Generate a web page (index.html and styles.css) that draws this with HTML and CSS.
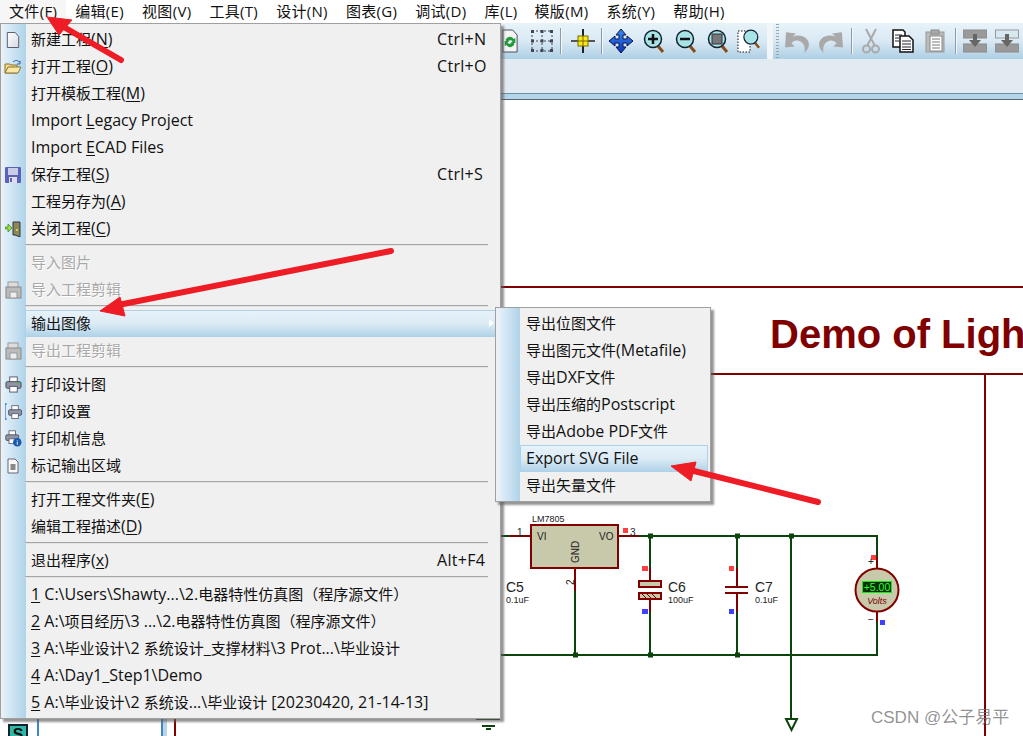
FILE: index.html
```html
<!DOCTYPE html>
<html lang="zh">
<head>
<meta charset="utf-8">
<title>Proteus</title>
<link rel="stylesheet" href="styles.css">
</head>
<body>
<svg class="defs" width="0" height="0" aria-hidden="true">
  <defs>
    <linearGradient id="blue" x1="0" y1="0" x2="0" y2="1"><stop offset="0" stop-color="#3d8cf0"/><stop offset="1" stop-color="#0a34c0"/></linearGradient>
    <linearGradient id="page" x1="0" y1="0" x2="1" y2="1"><stop offset="0" stop-color="#fff"/><stop offset="1" stop-color="#d5dae2"/></linearGradient>
    <g id="mag"><path d="M17 18l5 6" stroke="#8a4b12" stroke-width="3"/><circle cx="12" cy="11" r="8.5" fill="#a8e4e6" stroke="#123" stroke-width="1.5"/></g>
    <g id="printer"><rect x="5" y="1" width="8" height="6" fill="#fff" stroke="#556"/><rect x="1" y="6" width="16" height="7" rx="1.5" fill="#8e96a4" stroke="#445"/><rect x="5" y="11" width="8" height="6" fill="#fff" stroke="#556"/></g>
    <g id="grey-doc"><rect x="3" y="1" width="10" height="12" fill="#ddd" stroke="#999"/><rect x="1" y="6" width="15" height="11" fill="#bbb" stroke="#888"/><rect x="5" y="11" width="7" height="6" fill="#eee" stroke="#999"/></g>
  </defs>
</svg>

<header class="menubar">
  <span class="top active">文件(F)</span>
  <span class="top">编辑(E)</span>
  <span class="top">视图(V)</span>
  <span class="top">工具(T)</span>
  <span class="top">设计(N)</span>
  <span class="top">图表(G)</span>
  <span class="top">调试(D)</span>
  <span class="top">库(L)</span>
  <span class="top">模版(M)</span>
  <span class="top">系统(Y)</span>
  <span class="top">帮助(H)</span>
</header>

<div class="toolbar">
  <div class="tb-group first">
    <span class="tool"><svg width="16" height="24" viewBox="0 0 18 24" preserveAspectRatio="none"><path d="M1 1h11l5 5v17H1z" fill="#f4f4f4" stroke="#445"/><path d="M4 11c2-4 7-4 9-1l2-1v5h-5l2-2c-2-1-4-1-6 1z" fill="#1f9a3c"/><path d="M14 15c-2 4-7 4-9 1l-2 1v-5h5l-2 2c2 1 4 1 6-1z" fill="#1f9a3c"/></svg></span>
    <span class="tool"><svg width="24" height="24" viewBox="0 0 24 24"><path d="M2 2h20M2 12h20M2 22h20M2 2v20M12 2v20M22 2v20" stroke="#445" stroke-dasharray="2 2" fill="none"/><path d="M1 1h3v3H1zM10.500 1h3v3h-3zM20 1h3v3h-3zM1 10.500h3v3H1zM10.500 10.500h3v3h-3zM20 10.500h3v3h-3zM1 20h3v3H1zM10.500 20h3v3h-3zM20 20h3v3h-3z" fill="#445"/></svg></span>
    <span class="tsep sep-a"></span>
    <span class="tool"><svg width="26" height="26" viewBox="0 0 26 26"><path d="M1 13h24" stroke="#555" stroke-width="2"/><path d="M13 1v24" stroke="#222" stroke-width="2"/><rect x="8" y="8" width="10" height="10" fill="#f8e81c" stroke="#7a6a00"/><path d="M13 8v10M8 13h10" stroke="#7a6a00"/></svg></span>
    <span class="tsep sep-b"></span>
    <span class="tool"><svg width="26" height="26" viewBox="0 0 26 26"><path d="M13 1l5 6h-3v4h4V8l6 5-6 5v-3h-4v4h3l-5 6-5-6h3v-4H7v3l-6-5 6-5v3h4V7H8z" fill="url(#blue)" stroke="#08154a"/></svg></span>
    <span class="tool"><svg width="24" height="26" viewBox="0 0 24 26"><use href="#mag"/><path d="M7 11h10M12 6v10" stroke="#111" stroke-width="2.500"/></svg></span>
    <span class="tool"><svg width="24" height="26" viewBox="0 0 24 26"><use href="#mag"/><path d="M7 11h10" stroke="#111" stroke-width="2.500"/></svg></span>
    <span class="tool"><svg width="24" height="26" viewBox="0 0 24 26"><use href="#mag"/><rect x="7" y="6" width="10" height="10" fill="#777" stroke="#333"/></svg></span>
    <span class="tool"><svg width="24" height="26" viewBox="0 0 24 26"><rect x="1" y="3" width="12" height="21" fill="#fff" stroke="#111" stroke-dasharray="1.500 1.500"/><use href="#mag" transform="translate(4 0) scale(.82)"/></svg></span>
  </div>
  <div class="tb-group second">
    <span class="grip"></span>
    <span class="tool"><svg width="26" height="26" viewBox="0 0 24 24"><path d="M1 4l9 1-3 3c6-3 14 0 15 6 .5 3-1 6-4 9 1-6-1-10-5-11-3-1-5 0-7 2l3 3-9 1z" fill="#a9a9a9"/></svg></span>
    <span class="tool"><svg width="26" height="26" viewBox="0 0 24 24"><path d="M23 4l-9 1 3 3c-6-3-14 0-15 6-.5 3 1 6 4 9-1-6 1-10 5-11 3-1 5 0 7 2l-3 3 9 1z" fill="#a9a9a9"/></svg></span>
    <span class="tsep sep-c"></span>
    <span class="tool"><svg width="18" height="26" viewBox="0 0 18 26" fill="none" stroke="#aaa" stroke-width="2"><path d="M4 1l9 17M14 1L5 18"/><circle cx="4.500" cy="21" r="3.500"/><circle cx="13.500" cy="21" r="3.500"/></svg></span>
    <span class="tool"><svg width="22" height="24" viewBox="0 0 22 24"><path d="M1 1h10l2 2v15H1z" fill="#fff" stroke="#111" stroke-width="1.500"/><path d="M8 7h9l4 4v12H8z" fill="#fff" stroke="#111" stroke-width="1.500"/><path d="M3 6h7M3 9h4M3 12h4M10 12h9M10 15h9M10 18h9M10 20.500h9" stroke="#223"/></svg></span>
    <span class="tool"><svg width="20" height="24" viewBox="0 0 20 24"><rect x="1" y="3" width="18" height="20" fill="#bbb" stroke="#999"/><rect x="6" y="1" width="8" height="4" fill="#aaa" stroke="#888"/><rect x="5" y="7" width="12" height="15" fill="#fff" stroke="#888"/><path d="M7 10h8M7 13h8M7 16h8M7 19h8" stroke="#777"/></svg></span>
    <span class="tsep sep-d"></span>
    <span class="tool"><svg width="24" height="24" viewBox="0 0 24 24"><rect y="1" width="24" height="8" fill="#9a9a9a" stroke="#8a8a8a"/><rect y="15" width="24" height="8" fill="#9a9a9a" stroke="#8a8a8a"/><path d="M10 5h4v6h4l-6 7-6-7h4z" fill="#666"/></svg></span>
    <span class="tool"><svg width="24" height="24" viewBox="0 0 24 24"><rect x=".5" y="1" width="23" height="8" fill="#d8e8f0" stroke="#999"/><rect y="15" width="24" height="8" fill="#9a9a9a" stroke="#8a8a8a"/><path d="M10 5h4v6h4l-6 7-6-7h4z" fill="#666"/></svg></span>
  </div>
</div>
<div class="ribbon"></div>
<div class="strip"></div>

<main class="workspace">
  <aside class="sidebar"><span class="s-icon">S</span></aside>
  <div class="side-edge"></div>
  <section class="canvas">
    <svg class="sheet" width="1023" height="636" viewBox="0 100 1023 636">
      <g class="frame">
        <path d="M0 287H1023M500 374H1023M985 374V736M175 500V736"/>
      </g>
      <text class="title" x="770" y="348">Demo of Light</text>
      <g class="wire">
        <path d="M501 536H510M639 536H877V557M575 591V655M501 655H877V622M650 536V568M650 612V655M737 536V568M737 612V655M791 536V720M786 719H797L791.500 730Z"/>
        <path d="M476 719H500M482 726H495M486 729H491"/>
      </g>
      <g class="part">
        <path d="M510 536H531M618 536H639M575 568V591M650 568V581M650 599V612M737 568V587M737 593V612M877 557V568M877 612V622"/>
        <rect x="531" y="525" width="87" height="43"/>
        <rect x="639" y="581" width="22" height="6"/>
        <rect x="639" y="593" width="22" height="6"/>
        <path class="hatch" d="M642 594l4 4M647 594l4 4M652 594l4 4"/>
        <path d="M725 587H748M725 593H748"/>
        <circle cx="877" cy="590" r="21.500"/>
      </g>
      <g class="dots">
        <rect x="648" y="533.500" width="5" height="5"/><rect x="735" y="533.500" width="5" height="5"/><rect x="789" y="533.500" width="5" height="5"/>
        <rect x="573" y="652.500" width="5" height="5"/><rect x="648" y="652.500" width="5" height="5"/><rect x="735" y="652.500" width="5" height="5"/>
      </g>
      <g class="pin-red">
        <rect x="623" y="528" width="5" height="5"/><rect x="642" y="566" width="6" height="5"/><rect x="729" y="566" width="5" height="5"/><rect x="871" y="555" width="5" height="5"/>
      </g>
      <g class="pin-blue">
        <rect x="642" y="609" width="6" height="5"/><rect x="729" y="609" width="5" height="5"/><rect x="880" y="620" width="5" height="5"/>
      </g>
      <g class="sch">
        <text class="s9" x="532" y="522">LM7805</text>
        <text class="s10" x="537" y="540">VI</text>
        <text class="s10" x="599" y="540">VO</text>
        <text class="s10" transform="translate(579 563) rotate(-90)">GND</text>
        <text class="s10" x="517" y="536">1</text>
        <text class="s10" x="630" y="536">3</text>
        <text class="s10" transform="translate(574 585) rotate(-90)">2</text>
        <text class="s14" x="506" y="592">C5</text><text class="s9" x="506" y="603">0.1uF</text>
        <text class="s14" x="668" y="592">C6</text><text class="s9" x="668" y="603">100uF</text>
        <text class="s14" x="755" y="592">C7</text><text class="s9" x="755" y="603">0.1uF</text>
        <text class="s10" x="868" y="565">+</text>
        <text class="s10" x="868" y="623">−</text>
      </g>
      <rect class="lcd" x="862.500" y="581.500" width="29" height="11"/>
      <text class="lcd-text" x="877" y="591" text-anchor="middle">+5.00</text>
      <text class="volts" x="877" y="604" text-anchor="middle">Volts</text>
    </svg>
  </section>
</main>

<nav class="menu">
  <div class="item"><span class="ico"><svg width="14" height="18" viewBox="0 0 16 18" preserveAspectRatio="none"><path d="M1.500 1.500h9l4 4v11h-13z" fill="url(#page)" stroke="#556"/></svg></span><span class="lab">新建工程<span class="en">(<u>N</u>)</span><em class="en">Ctrl+N</em></span></div>
  <div class="item"><span class="ico"><svg width="18" height="16" viewBox="0 0 18 16"><path d="M1 14V5h5l1 1h6v8z" fill="#f2d98a" stroke="#8a7530"/><path d="M1 14l3-6h13l-3 6z" fill="#f8e8a8" stroke="#8a7530"/><path d="M9 3c2-2 5-2 6 0l1-1v3h-3" fill="none" stroke="#2a5ca8"/></svg></span><span class="lab">打开工程<span class="en">(<u>O</u>)</span><em class="en">Ctrl+O</em></span></div>
  <div class="item"><span class="ico"></span><span class="lab">打开模板工程<span class="en">(<u>M</u>)</span></span></div>
  <div class="item"><span class="ico"></span><span class="lab"><span class="en">Import <u>L</u>egacy Project</span></span></div>
  <div class="item"><span class="ico"></span><span class="lab"><span class="en">Import <u>E</u>CAD Files</span></span></div>
  <div class="item"><span class="ico"><svg width="16" height="16" viewBox="0 0 16 16"><rect width="16" height="16" rx="1" fill="#5c62b8"/><rect x="3" y="1" width="10" height="7" fill="#c9cde8"/><rect x="4" y="10" width="8" height="6" fill="#dde"/><rect x="5" y="11" width="2" height="4" fill="#5c62b8"/></svg></span><span class="lab">保存工程<span class="en">(<u>S</u>)</span><em class="en">Ctrl+S</em></span></div>
  <div class="item"><span class="ico"></span><span class="lab">工程另存为<span class="en">(<u>A</u>)</span></span></div>
  <div class="item"><span class="ico"><svg width="16" height="16" viewBox="0 0 16 16"><path d="M8 1h7v15l-5-2H8z" fill="#8a8a55" stroke="#334"/><circle cx="12" cy="9" r="1" fill="#f0e060"/><path d="M0 6h3V3l4 4-4 4V8H0z" fill="#9ae040" stroke="#2a6a10" stroke-width=".6"/></svg></span><span class="lab">关闭工程<span class="en">(<u>C</u>)</span></span></div>
  <div class="sep"></div>
  <div class="item off"><span class="ico"></span><span class="lab">导入图片</span></div>
  <div class="item off"><span class="ico"><svg width="17" height="18" viewBox="0 0 17 18"><use href="#grey-doc"/></svg></span><span class="lab">导入工程剪辑</span></div>
  <div class="sep"></div>
  <div class="item on"><span class="ico"></span><span class="lab">输出图像<i class="caret"></i></span></div>
  <div class="item off"><span class="ico"><svg width="17" height="18" viewBox="0 0 17 18"><use href="#grey-doc"/></svg></span><span class="lab">导出工程剪辑</span></div>
  <div class="sep"></div>
  <div class="item"><span class="ico"><svg width="17" height="17" viewBox="0 0 18 18"><use href="#printer"/><path d="M13 8h2" stroke="#2c2"/></svg></span><span class="lab">打印设计图</span></div>
  <div class="item"><span class="ico"><svg width="17" height="17" viewBox="0 0 18 18"><path d="M2 1H0v16h2" fill="none" stroke="#1a4a9a"/><g transform="translate(3 2) scale(.85)"><use href="#printer"/></g></svg></span><span class="lab">打印设置</span></div>
  <div class="item"><span class="ico"><svg width="17" height="17" viewBox="0 0 18 18"><g transform="scale(.85)"><use href="#printer"/></g><circle cx="13" cy="13" r="4.500" fill="#1a5ab0"/><path d="M13 11v.8M13 12.500v3" stroke="#fff"/></svg></span><span class="lab">打印机信息</span></div>
  <div class="item"><span class="ico"><svg width="14" height="16" viewBox="0 0 14 16"><path d="M2 1h7l3 3v11H2z" fill="#f8f8f8" stroke="#667"/><rect x="4.500" y="6" width="5" height="6" fill="#888"/></svg></span><span class="lab">标记输出区域</span></div>
  <div class="sep"></div>
  <div class="item"><span class="ico"></span><span class="lab">打开工程文件夹<span class="en">(<u>E</u>)</span></span></div>
  <div class="item"><span class="ico"></span><span class="lab">编辑工程描述<span class="en">(<u>D</u>)</span></span></div>
  <div class="sep"></div>
  <div class="item"><span class="ico"></span><span class="lab">退出程序<span class="en">(<u>x</u>)</span><em class="en">Alt+F4</em></span></div>
  <div class="sep"></div>
  <div class="item"><span class="ico"></span><span class="lab"><span class="en"><u>1</u> C:\Users\Shawty...\2.</span>电器特性仿真图（程序源文件）</span></div>
  <div class="item"><span class="ico"></span><span class="lab"><span class="en"><u>2</u> A:\</span>项目经历<span class="en">\3 ...\2.</span>电器特性仿真图（程序源文件）</span></div>
  <div class="item"><span class="ico"></span><span class="lab"><span class="en"><u>3</u> A:\</span>毕业设计<span class="en">\2 </span>系统设计<span class="en">_</span>支撑材料<span class="en">\3 Prot...\</span>毕业设计</span></div>
  <div class="item"><span class="ico"></span><span class="lab"><span class="en"><u>4</u> A:\Day1_Step1\Demo</span></span></div>
  <div class="item"><span class="ico"></span><span class="lab"><span class="en"><u>5</u> A:\</span>毕业设计<span class="en">\2 </span>系统设<span class="en">...\</span>毕业设计<span class="en"> [20230420, 21-14-13]</span></span></div>
</nav>

<nav class="menu submenu">
  <div class="item"><span class="ico"></span><span class="lab">导出位图文件</span></div>
  <div class="item"><span class="ico"></span><span class="lab">导出图元文件<span class="en">(Metafile)</span></span></div>
  <div class="item"><span class="ico"></span><span class="lab">导出<span class="en">DXF</span>文件</span></div>
  <div class="item"><span class="ico"></span><span class="lab">导出压缩的<span class="en">Postscript</span></span></div>
  <div class="item"><span class="ico"></span><span class="lab">导出<span class="en">Adobe PDF</span>文件</span></div>
  <div class="item on"><span class="ico"></span><span class="lab"><span class="en">Export SVG File</span></span></div>
  <div class="item"><span class="ico"></span><span class="lab">导出矢量文件</span></div>
</nav>

<svg class="arrows" width="1023" height="736" viewBox="0 0 1023 736">
  <path class="shaft" d="M121 60L62 26"/>
  <path class="head" d="M47 17L72 20L59 35Z"/>
  <path class="shaft" d="M391 251L118 305"/>
  <path class="head" d="M100 311L120 297L125 316Z"/>
  <path class="shaft" d="M818 502L690 470"/>
  <path class="head" d="M671 466L696 462L691 481Z"/>
</svg>

<div class="watermark">CSDN @公子易平</div>
</body>
</html>
```
FILE: styles.css
```css
* { box-sizing: border-box; }
html, body { margin: 0; padding: 0; }
body {
  position: relative;
  width: 1023px;
  height: 736px;
  overflow: hidden;
  background: #fff;
  display: flex;
  flex-direction: column;
  font-family: "Open Sans", "Noto Sans CJK SC", sans-serif;
  font-size: 15px;
  color: #111;
}
.defs { position: absolute; }

.menubar {
  height: 23px;
  flex: none;
  display: flex;
  align-items: center;
  background: #fff;
}
.top { padding: 0 9px; line-height: 23px; white-space: nowrap; letter-spacing: .32px; }
.top.active { background: #f6f6f6; }
.top:nth-child(8) { margin-right: -1px; }

.toolbar { height: 36px; flex: none; display: flex; background: #f3f6f9; }
.tb-group {
  display: flex;
  align-items: center;
  background: linear-gradient(#e8f2f9, #d9e9f4 50%, #aecfe4);
}
.tb-group.first { width: 767px; padding-left: 494px; }
.tb-group.second { margin-left: 6px; flex: 1; padding-left: 3px; }
.tool { width: 32px; flex: none; display: flex; justify-content: center; align-items: center; }
.tsep { width: 1px; height: 26px; background: #8f9aa3; flex: none; box-shadow: 1px 0 0 #f4f8fb; }
.sep-a { margin: 0 6px 0 2px; }
.sep-b { margin: 0 3px 0 2px; }
.sep-c { margin: 0 3px 0 5px; }
.sep-d { margin: 0 3px 0 4px; }
.grip {
  width: 3px;
  height: 34px;
  margin-right: 3px;
  background: repeating-linear-gradient(#98a4ae 0 1px, transparent 1px 3px);
}
.ribbon { height: 34px; flex: none; background: #e3ebf2; }
.strip {
  height: 7px;
  flex: none;
  background: #b4d5ea;
  border-top: 1px solid #6f8ea3;
  border-bottom: 1px solid #56656f;
}

.workspace { flex: 1; display: flex; position: relative; min-height: 0; }
.sidebar {
  width: 39px;
  flex: none;
  background: #fff;
  border-right: 2px solid #3f86c4;
  padding: 624px 0 0 8px;
}
.s-icon {
  display: block;
  width: 20px;
  height: 22px;
  background: #2fb8a4;
  border: 2px solid #123;
  font: bold 16px/18px "Liberation Sans", sans-serif;
  text-align: center;
}
.side-edge { width: 124px; flex: none; border-right: 2px solid #3f86c4; }
.canvas { flex: 1; border-left: 4px solid #bcd5e6; position: relative; min-width: 0; }
.sheet { position: absolute; top: 0; left: -167px; }

.frame path { fill: none; stroke: #800000; stroke-width: 2; }
.title { font: bold 40px "Liberation Sans", sans-serif; fill: #800000; }
.wire path { fill: none; stroke: #0b450b; stroke-width: 2; }
.part path, .part rect, .part circle { stroke: #800000; stroke-width: 2; fill: none; }
.part rect, .part circle { fill: #c8c8aa; }
.part .hatch { stroke-width: 1; }
.dots rect { fill: #0b450b; }
.pin-red rect { fill: #ff4040; }
.pin-blue rect { fill: #4040ff; }
.sch text { font-family: "Liberation Sans", sans-serif; fill: #222; }
.s9 { font-size: 9px; }
.s10 { font-size: 10px; }
.s14 { font-size: 14px; }
.lcd { fill: #003000; stroke: #10e810; stroke-width: 1; }
.lcd-text { font: 10.500px "Liberation Sans", sans-serif; fill: #30ff30; }
.volts { font: italic 9px "Liberation Sans", sans-serif; fill: #800000; }

.menu {
  position: absolute;
  left: 0;
  top: 23px;
  width: 501px;
  height: 696px;
  padding: 2px 2px 0 0;
  background: linear-gradient(90deg, #e6f2fa, #afd3e9) 1px 0 / 24px 100% no-repeat, #f0f0f0;
  border: 1px solid #a0a0a0;
  box-shadow: 3px 3px 2px rgba(90, 90, 90, .65);
}
.item { height: 27px; display: flex; align-items: stretch; }
.ico { width: 24px; flex: none; display: flex; align-items: center; justify-content: center; }
.lab {
  flex: 1;
  position: relative;
  padding-left: 6px;
  line-height: 26px;
  white-space: nowrap;
}
.en { font-size: 16px; }
.lab u { text-underline-offset: 2px; }
.lab em { position: absolute; left: 412px; top: 0; font-style: normal; letter-spacing: .3px; }
.item.off .lab { color: #a9a9a9; text-shadow: 1px 1px 0 #fff; }
.item.on .lab {
  background: linear-gradient(#e8f3fa, #dcebf5 50%, #aed2e8);
  box-shadow: inset 0 0 0 1px #afd0e6;
}
.caret {
  position: absolute;
  right: 4px;
  top: 9px;
  width: 0;
  height: 0;
  border-left: 5px solid #fff;
  border-top: 4.500px solid transparent;
  border-bottom: 4.500px solid transparent;
}
.sep { height: 1px; margin: 2px 10px 4px 24px; background: #a6a6a6; box-shadow: 0 1px 0 #e2e2e2; }

.submenu {
  left: 495px;
  top: 307px;
  width: 216px;
  height: 195px;
  padding: 2px 2px 0 0;
  background: linear-gradient(90deg, #e6f2fa, #afd3e9) 2px 0 / 22px 100% no-repeat, #f0f0f0;
}

.arrows { position: absolute; left: 0; top: 0; pointer-events: none; }
.shaft { fill: none; stroke: #ee1c25; stroke-width: 6; stroke-linecap: round; }
.head { fill: #ee1c25; stroke: #ee1c25; }

.watermark {
  position: absolute;
  left: 871px;
  top: 707px;
  font: 17px/22px "Liberation Sans", "Noto Sans CJK SC", sans-serif;
  color: rgba(110, 110, 110, .75);
  white-space: nowrap;
}
```
